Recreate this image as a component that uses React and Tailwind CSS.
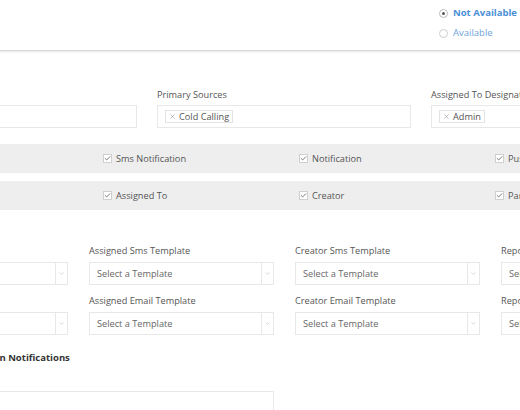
import { Check, ChevronDown, X } from 'lucide-react';

const checkRows = [
    ['Email', 'Sms Notification', 'Notification', 'Push Notification'],
    ['Reporting To', 'Assigned To', 'Creator', 'Participants'],
];

const selectRows = [
    ['Sms Template', 'Assigned Sms Template', 'Creator Sms Template', 'Reporting Sms Template'],
    ['Email Template', 'Assigned Email Template', 'Creator Email Template', 'Reporting Email Template'],
];

function Tag({ label }) {
    return (
        <span className="inline-flex items-center gap-[3px] border border-[#e3e3e3] bg-white px-[3px] h-[13px] text-[9.2px] text-[#555] leading-none">
            <X className="w-[7px] h-[7px] text-[#999]" strokeWidth={2} />
            {label}
        </span>
    );
}

function CheckItem({ label }) {
    return (
        <div className="flex items-center gap-[4px] pl-[24px] text-[9.2px] text-[#555] whitespace-nowrap">
            <span className="w-[9px] h-[9px] border border-[#cfcfcf] bg-white flex items-center justify-center">
                <Check className="w-[7px] h-[7px] text-[#666]" strokeWidth={3} />
            </span>
            {label}
        </div>
    );
}

function Select({ label }) {
    return (
        <div className="flex flex-col">
            <span className="text-[9.2px] text-[#555] leading-[12px] mb-[5px] whitespace-nowrap">{label}</span>
            <div className="flex h-[23px] border border-[#e8e8e8] bg-white">
                <span className="flex-1 flex items-center pl-[7px] text-[9.2px] text-[#666]">Select a Template</span>
                <span className="w-[12px] border-l border-[#e8e8e8] flex items-center justify-center">
                    <ChevronDown className="w-[7px] h-[7px] text-[#aaa]" strokeWidth={1.5} />
                </span>
            </div>
        </div>
    );
}

export default function App() {
    return (
        <div className="w-[520px] h-[410px] overflow-hidden bg-white" style={{ fontFamily: '"Open Sans", sans-serif' }}>
            <div className="h-[51px] border-b border-[#d6d6d6] shadow-[0_1px_2px_rgba(0,0,0,0.1)] flex justify-end">
                <div className="flex flex-col gap-[8px] pt-[7px] w-[81px] whitespace-nowrap">
                    <label className="flex items-center gap-[5px] text-[9.5px] font-bold text-[#4a8fd6] leading-[12px]">
                        <span className="w-[9px] h-[9px] rounded-full border border-[#bbb] flex items-center justify-center">
                            <span className="w-[3px] h-[3px] rounded-full bg-[#555]" />
                        </span>
                        Not Available
                    </label>
                    <label className="flex items-center gap-[5px] text-[9.5px] text-[#6fa3dc] leading-[12px]">
                        <span className="w-[9px] h-[9px] rounded-full border border-[#ccc]" />
                        Available
                    </label>
                </div>
            </div>

            <div className="ml-[-117px] w-[900px]">
                <div className="grid grid-cols-[254px_254px_254px] gap-x-[20px] pt-[38px]">
                    {[['Secondary Sources', null], ['Primary Sources', 'Cold Calling'], ['Assigned To Designation', 'Admin']].map(([label, tag]) => (
                        <div key={label} className="flex flex-col">
                            <span className="text-[9.2px] text-[#555] leading-[12px] mb-[4px] whitespace-nowrap">{label}</span>
                            <div className="h-[23px] border border-[#e8e8e8] flex items-center pl-[7px]">
                                {tag && <Tag label={tag} />}
                            </div>
                        </div>
                    ))}
                </div>

                <div className="mt-[16px] flex flex-col gap-[8px]">
                    {checkRows.map((row, i) => (
                        <div key={i} className="h-[29px] bg-[#eeeeee] grid grid-cols-[196px_196px_196px_196px] items-center">
                            {row.map((c) => (
                                <CheckItem key={c} label={c} />
                            ))}
                        </div>
                    ))}
                </div>

                <div className="mt-[35px] grid grid-cols-[185px_185px_185px_185px] gap-x-[21px] gap-y-[10px]">
                    {selectRows.flat().map((s, i) => (
                        <Select key={i} label={s} />
                    ))}
                </div>

                <h3 className="mt-[17px] text-[9.5px] font-bold text-[#333] leading-[12px] whitespace-nowrap">Lead Follow Up Escalation Notifications</h3>

                <div className="mt-[27px] w-[391px] h-[40px] border border-[#e8e8e8]" />
            </div>
        </div>
    );
}
